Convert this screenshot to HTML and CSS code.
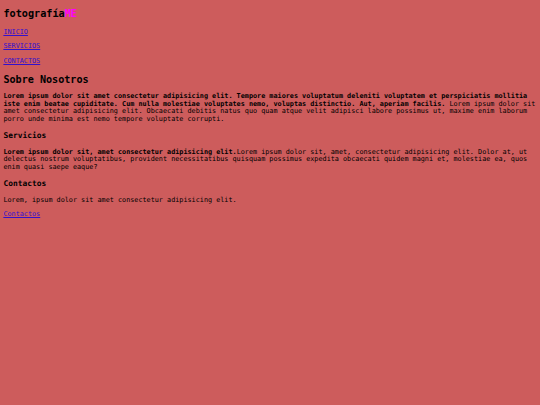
FILE: index.html
```html
<!DOCTYPE html>
<html lang="es">
<head>
<meta charset="utf-8">
<title>fotografíaME</title>
<link rel="stylesheet" href="styles.css">
</head>
<body>
<header class="site-header">
  <h1 class="logo">fotografía<span class="logo-accent">ME</span></h1>
  <nav class="menu">
    <p><a href="#">INICIO</a></p>
    <p><a href="#">SERVICIOS</a></p>
    <p><a href="#">CONTACTOS</a></p>
  </nav>
</header>
<main>
  <section class="block">
    <h2 class="title">Sobre Nosotros</h2>
    <p class="text"><strong>Lorem ipsum dolor sit amet consectetur adipisicing elit. Tempore maiores voluptatum deleniti voluptatem et perspiciatis mollitia iste enim beatae cupiditate. Cum nulla molestiae voluptates nemo, voluptas distinctio. Aut, aperiam facilis.</strong> Lorem ipsum dolor sit amet consectetur adipisicing elit. Obcaecati debitis natus quo quam atque velit adipisci labore possimus ut, maxime enim laborum porro unde minima est nemo tempore voluptate corrupti.</p>
  </section>
  <section class="block">
    <h3 class="subtitle">Servicios</h3>
    <p class="text"><strong>Lorem ipsum dolor sit, amet consectetur adipisicing elit.</strong>Lorem ipsum dolor sit, amet, consectetur adipisicing elit. Dolor at, ut delectus nostrum voluptatibus, provident necessitatibus quisquam possimus expedita obcaecati quidem magni et, molestiae ea, quos enim quasi saepe eaque?</p>
  </section>
  <section class="block">
    <h3 class="subtitle">Contactos</h3>
    <p class="text">Lorem, ipsum dolor sit amet consectetur adipisicing elit.</p>
    <p class="text"><a href="#">Contactos</a></p>
  </section>
</main>
</body>
</html>
```

FILE: styles.css
```css
html {
  background: #cd5c5c;
}
body {
  margin: 3.375px;
  font-family: "DejaVu Sans Mono", monospace;
  font-size: 6.8px;
  line-height: 7.5px;
  color: #000;
  background: #cd5c5c;
}
p {
  margin: 6.8px 0;
}
a {
  color: #3311cc;
}
.logo {
  font-size: 10.2px;
  line-height: 11px;
  margin: 4.8px 0 9.8px;
  font-weight: bold;
}
.logo-accent {
  color: #ff00ff;
}
.title {
  font-size: 10.125px;
  line-height: 11px;
  margin: 8.6px 0;
  font-weight: bold;
}
.subtitle {
  font-size: 7.9px;
  line-height: 9px;
  margin: 8.2px 0;
  font-weight: bold;
}
```
